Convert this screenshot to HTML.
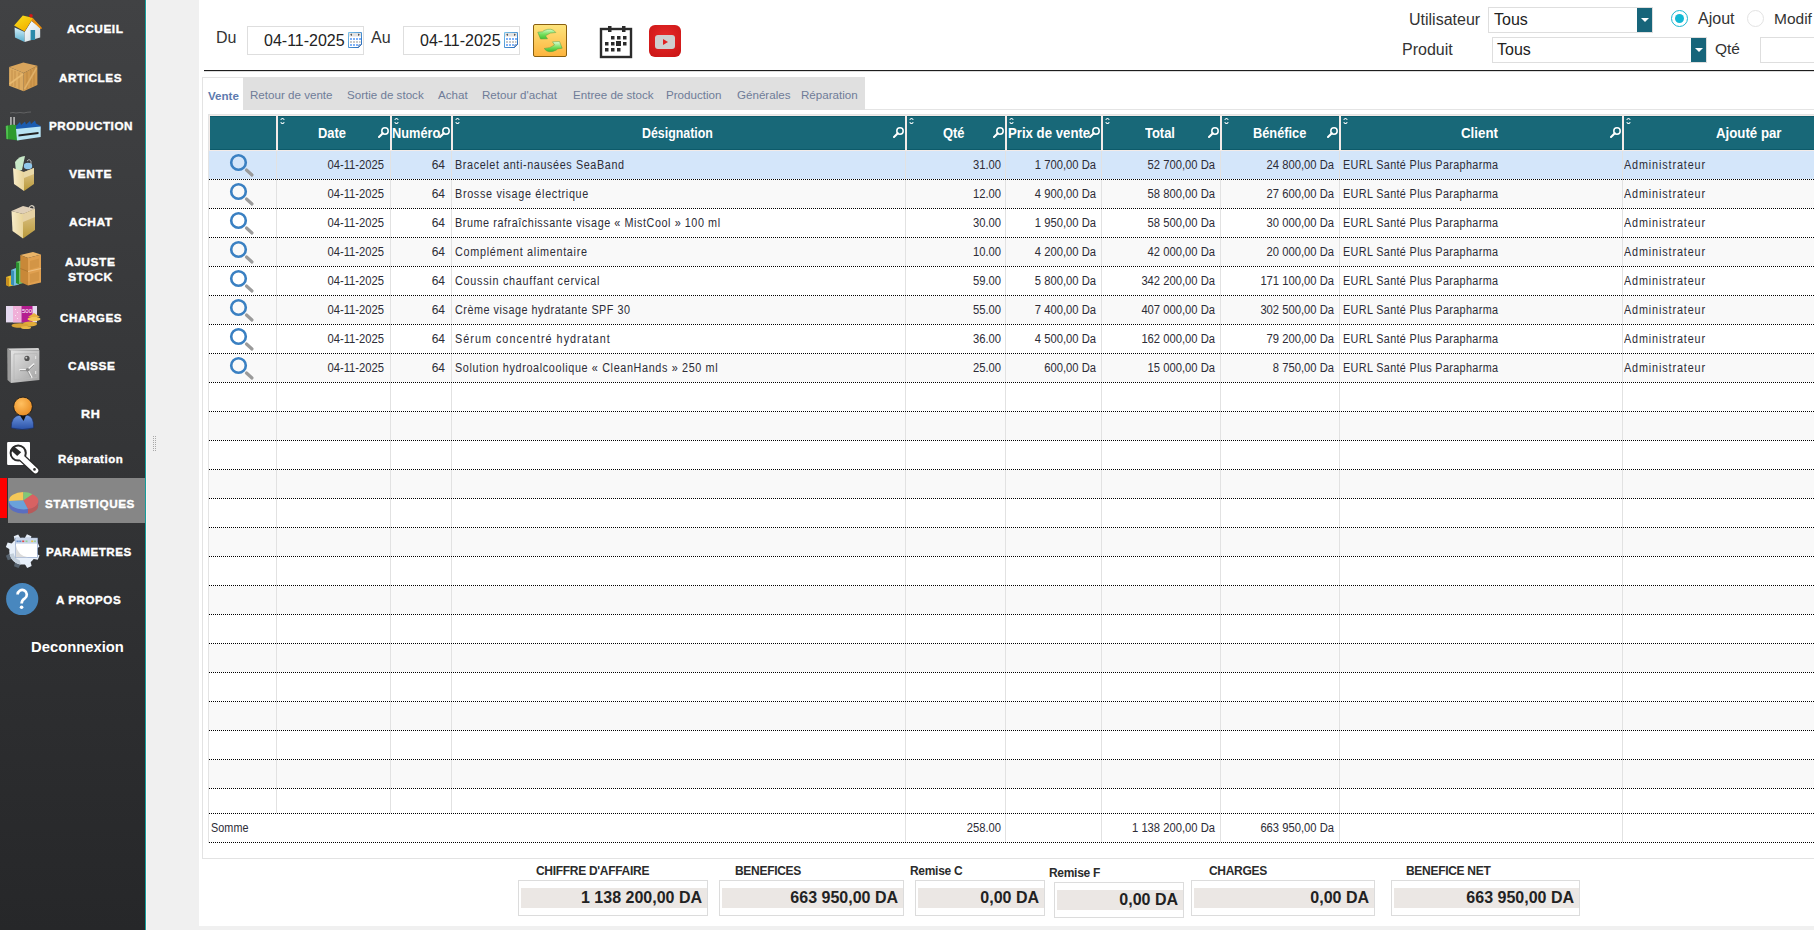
<!DOCTYPE html>
<html><head><meta charset="utf-8"><title>Statistiques</title>
<style>
*{box-sizing:border-box;margin:0;padding:0}
html,body{width:1814px;height:930px;overflow:hidden;background:#f0f0f0;font-family:"Liberation Sans",sans-serif;position:relative}
.abs{position:absolute}
.t{position:absolute;white-space:nowrap;line-height:1}
#side{position:absolute;left:0;top:0;width:145px;height:930px;background:linear-gradient(#414244,#262729)}
#edge{position:absolute;left:145px;top:0;width:1px;height:930px;background:#139e9c}
#edge2{position:absolute;left:146px;top:0;width:1px;height:930px;background:#fbf4f2}
.nav{position:absolute;color:#fff;font-weight:bold;font-size:11px;letter-spacing:0.5px;-webkit-text-stroke:0.35px #fff;white-space:nowrap;line-height:1}
#content{position:absolute;left:199px;top:0;width:1615px;height:926px;background:#fff}
.inp{position:absolute;border:1px solid #dedede;background:#fff}
.sel{position:absolute;border:1px solid #dedede;background:#fff}
.dd{position:absolute;background:#17657a}
.dd:after{content:"";position:absolute;left:4px;top:10px;border-left:4px solid transparent;border-right:4px solid transparent;border-top:4px solid #fff}
.tab{position:absolute;top:89px;font-size:11.6px;color:#6f7c98;white-space:nowrap;line-height:1}
.hc{position:absolute;top:116px;height:34px;background:#186878;border-top:1px solid #0d5a6a;border-bottom:1px solid #0d5a6a}
.ht{position:absolute;top:126px;color:#fff;font-weight:bold;font-size:14px;white-space:nowrap;line-height:1}
.row{position:absolute;left:209px;width:1605px;border-bottom:1px dotted #000}
.sep{position:absolute;width:1px;background:#e2e2e2}
.d{position:absolute;font-size:12px;color:#2c2c36;white-space:nowrap;line-height:1}
.r{text-align:right}
.n{transform:scaleX(0.935);transform-origin:100% 50%}
.lbl{position:absolute;font-size:12px;font-weight:bold;color:#2b2b2b;white-space:nowrap;line-height:1;letter-spacing:-0.3px}
.box{position:absolute;border:1px solid #dcdcdc;background:#fff}
.boxin{position:absolute;left:2px;right:0;top:7px;height:20px;background:#ebe7e4}
.val{position:absolute;right:5px;top:3px;font-size:16px;font-weight:bold;color:#222;white-space:nowrap;line-height:1}
</style></head><body>

<div id="side"></div><div id="edge"></div><div id="edge2"></div>
<div class="abs" style="left:0;top:478px;width:7px;height:40px;background:#ff0000"></div>
<div class="abs" style="left:8px;top:478px;width:137px;height:45px;background:#868686"></div>
<div class="nav" style="left:67.2px;top:24px;transform:scaleX(1.077);transform-origin:0 50%">ACCUEIL</div>
<div class="nav" style="left:59px;top:73px;transform:scaleX(1.068);transform-origin:0 50%">ARTICLES</div>
<div class="nav" style="left:48.5px;top:121px;transform:scaleX(1.064);transform-origin:0 50%">PRODUCTION</div>
<div class="nav" style="left:69.3px;top:169px;transform:scaleX(1.097);transform-origin:0 50%">VENTE</div>
<div class="nav" style="left:68.5px;top:217px;transform:scaleX(1.0875);transform-origin:0 50%">ACHAT</div>
<div class="nav" style="left:65px;top:257px;transform:scaleX(1.087);transform-origin:0 50%">AJUSTE</div>
<div class="nav" style="left:68px;top:272px;transform:scaleX(1.1);transform-origin:0 50%">STOCK</div>
<div class="nav" style="left:59.5px;top:313px;transform:scaleX(1.06);transform-origin:0 50%">CHARGES</div>
<div class="nav" style="left:67.5px;top:361px;transform:scaleX(1.081);transform-origin:0 50%">CAISSE</div>
<div class="nav" style="left:80.6px;top:409px;transform:scaleX(1.144);transform-origin:0 50%">RH</div>
<div class="nav" style="left:58px;top:454px;transform:scaleX(1.044);transform-origin:0 50%">Réparation</div>
<div class="nav" style="left:45.2px;top:499px;transform:scaleX(1.065);transform-origin:0 50%">STATISTIQUES</div>
<div class="nav" style="left:46.2px;top:547px;transform:scaleX(1.057);transform-origin:0 50%">PARAMETRES</div>
<div class="nav" style="left:56.3px;top:595px;transform:scaleX(1.057);transform-origin:0 50%">A PROPOS</div>
<div class="abs" style="left:31px;top:640px;color:#fff;font-weight:bold;font-size:14.8px;white-space:nowrap;line-height:1">Deconnexion</div>
<svg class="abs" style="left:0;top:0" width="145" height="700" viewBox="0 0 145 700">
<defs>
<linearGradient id="roof" x1="0" y1="0" x2="1" y2="1"><stop offset="0" stop-color="#f8e020"/><stop offset="0.6" stop-color="#f5b800"/><stop offset="1" stop-color="#f08800"/></linearGradient>
<linearGradient id="wallL" x1="0" y1="0" x2="0" y2="1"><stop offset="0" stop-color="#d8f0f8"/><stop offset="1" stop-color="#58b0d0"/></linearGradient>
<linearGradient id="wallF" x1="0" y1="0" x2="1" y2="1"><stop offset="0" stop-color="#ffffff"/><stop offset="1" stop-color="#c8d8e0"/></linearGradient>
<linearGradient id="bagL" x1="0" y1="0" x2="1" y2="0"><stop offset="0" stop-color="#f8ecc8"/><stop offset="1" stop-color="#e8d49a"/></linearGradient>
<linearGradient id="bagR" x1="0" y1="0" x2="0" y2="1"><stop offset="0" stop-color="#e0c890"/><stop offset="1" stop-color="#b89838"/></linearGradient>
<linearGradient id="safe" x1="0" y1="0" x2="1" y2="1"><stop offset="0" stop-color="#e4e4e4"/><stop offset="1" stop-color="#a0a0a0"/></linearGradient>
<linearGradient id="body" x1="0" y1="0" x2="0" y2="1"><stop offset="0" stop-color="#6c94dc"/><stop offset="1" stop-color="#2a52a8"/></linearGradient>
<radialGradient id="head" cx="0.4" cy="0.35" r="0.7"><stop offset="0" stop-color="#ffc060"/><stop offset="1" stop-color="#e88a20"/></radialGradient>
<linearGradient id="help" x1="0" y1="0" x2="0" y2="1"><stop offset="0" stop-color="#4e8cc8"/><stop offset="1" stop-color="#3f78b4"/></linearGradient>
</defs>
<!-- house -->
<path d="M14.6 27.4 L24.6 32 L24.6 42 L15 37.4 Z" fill="url(#wallL)"/>
<path d="M24.6 32 L31.5 21 L40.2 27.4 L40.2 37.4 L24.6 42 Z" fill="url(#wallF)"/>
<rect x="30.6" y="30" width="4.5" height="10" fill="#2a8aaa"/>
<path d="M14.1 25.5 L22.8 15.5 L32.4 17.8 L42 28.3 L40.5 28.8 L31.5 20.5 L24.6 31.5 Z" fill="url(#roof)"/>
<path d="M31.5 20.5 L32.4 17.8 L42 28.3 L40.5 28.8 Z" fill="#e88a10"/>
<circle cx="31" cy="15.8" r="1.8" fill="#d01818"/>
<!-- crate -->
<path d="M9.1 67.1 L23.3 62.5 L37.4 65.7 L23.7 73 Z" fill="#d9a55c"/>
<path d="M9.1 67.1 L23.7 73 L23.7 91.3 L9.1 85.8 Z" fill="#dcaa60"/>
<path d="M23.7 73 L37.4 65.7 L37.4 84.9 L23.7 91.3 Z" fill="#d19a4e"/>
<path d="M10 84 L22.5 74 M25 89 L36 68 M12 70 V86 M15 71 V87 M19 72.5 V89 M27 72 V89 M31 70 V87 M34 68 V86" stroke="#b07a38" stroke-width="0.7" opacity="0.7"/>
<path d="M9.5 84 L23 74" stroke="#e8ba70" stroke-width="1.6"/><path d="M24.5 89 L36.5 68" stroke="#e0b068" stroke-width="1.6"/>
<!-- factory -->
<g stroke="#999" stroke-width="0.5" fill="none" opacity="0.8"><path d="M10 113 q3 -1 6 0 q4 -1 8 0 q3 -1 7 -1"/></g>
<rect x="10" y="117" width="1.8" height="9" fill="#aaa"/><rect x="13.2" y="117" width="1.8" height="9" fill="#aaa"/>
<path d="M5.8 126 L13 124.5 L19 126 L19 140.5 L6.5 139 Z" fill="#2e9a2e"/><path d="M5.8 126 L8 125.6 L8 139.3 L6.5 139 Z" fill="#50c050"/>
<path d="M16 129 L16 126 L20 122 L21 125 L25 121.5 L26 124.5 L30 121 L31 124 L35 120.5 L36 123.5 L40.7 126 L40.7 129 Z" fill="#1a5cb0"/>
<path d="M16 129 L40.7 126.5 L40.7 137 L17 140.5 Z" fill="#b8e4f4"/>
<path d="M18.5 134.5 L38.5 132 L38.5 134 L18.5 136.5 Z" fill="#222"/>
<!-- bag vente -->
<path d="M15 162 Q19 156 25 156 L22 170 L16 172 Z" fill="#c8e8c8"/>
<ellipse cx="28" cy="166" rx="4.2" ry="3.2" fill="#90c8ec"/><path d="M27 161 q2 -3 4 0 v3" stroke="#ccc" stroke-width="0.8" fill="none"/>
<path d="M13 168 L24 172 L24 191 L14 184 Z" fill="url(#bagL)"/>
<path d="M24 172 L34 168 L34 184 L24 191 Z" fill="url(#bagR)"/>
<path d="M24 172 L34 168 L34 174 L24 178 Z" fill="#e8d8a8"/>
<!-- bag achat -->
<path d="M29 208 q2 -4 5 -1 v5" stroke="#d8d0c0" stroke-width="1.2" fill="none"/>
<path d="M11.5 211 L23 214 L35 209 L23 206 Z" fill="#e0d0b8"/>
<path d="M11.5 211 L23 214 L23 238.5 L12.5 231 Z" fill="url(#bagL)"/>
<path d="M23 214 L35 209 L35 230 L23 238.5 Z" fill="url(#bagR)"/>
<path d="M23 214 L35 209 L35 217 L23 222 Z" fill="#e6d2a4"/>
<!-- ajuste stock -->
<path d="M6 277 L10.5 275.5 L13.5 277 L13.5 285.6 L9 286.5 L6 285 Z" fill="#e8c030"/><path d="M6 277 L9 278 L9 286.5 L6 285 Z" fill="#c89020"/>
<path d="M11 270 L16 268 L19 270 L19 284.6 L14 285.8 L11 284.5 Z" fill="#78c0e0"/><path d="M11 270 L14 271 L14 285.8 L11 284.5 Z" fill="#3890b8"/>
<path d="M16 262 L21 260.5 L23.7 262 L23.7 283 L19 284.2 L16 283 Z" fill="#70c068"/><path d="M16 262 L19 263 L19 284.2 L16 283 Z" fill="#2a9030"/>
<path d="M20.3 255 L33 252 L41 254.5 L28 258 Z" fill="#eab468"/>
<path d="M20.3 255 L28 258 L28 285.4 L20.3 282 Z" fill="#c88838"/>
<path d="M28 258 L41 254.5 L41 282.5 L28 285.4 Z" fill="#e0a050"/>
<path d="M28 271.5 L41 268.5" stroke="#f0c080" stroke-width="1.2"/><path d="M20.3 268.5 L28 271.5" stroke="#b07830" stroke-width="1"/>
<path d="M30 261 L39 258.5 L39 267 L30 269.5 Z M30 274 L39 271.5 L39 280.5 L30 283 Z" fill="#c98d40" opacity="0.6"/>
<!-- charges -->
<rect x="6" y="306" width="31" height="16.4" fill="#e6daf0"/>
<rect x="13" y="306" width="8.5" height="16.4" fill="#f0b0d8"/>
<rect x="21.5" y="306" width="11" height="16.4" fill="#b41e90"/>
<text x="22" y="312.5" font-family="Liberation Sans" font-size="6" fill="#fff">500</text>
<g fill="#fff" opacity="0.7"><rect x="15" y="309" width="1" height="1"/><rect x="17" y="312" width="1" height="1"/><rect x="15" y="315" width="1" height="1"/><rect x="17" y="318" width="1" height="1"/></g>
<ellipse cx="34" cy="319" rx="6.5" ry="2.2" fill="#f4c658"/><path d="M28 317 L34 313 L40 317" fill="#e8b040"/>
<ellipse cx="30" cy="324" rx="7" ry="2.4" fill="#e2ac3a"/>
<ellipse cx="20" cy="325.5" rx="8.5" ry="2.3" fill="#d8a236"/>
<ellipse cx="26" cy="327.5" rx="5" ry="1.5" fill="#e8b848"/>
<!-- safe -->
<path d="M7.2 348.5 L11 351 L11 383 L7.5 380 Z" fill="#9a9a9a"/>
<path d="M7.2 348.5 L38.5 348 L39.4 350.5 L11 351 Z" fill="#cfcfcf"/>
<path d="M11 351 L39.4 350.5 L39.4 380 L11 383 Z" fill="url(#safe)"/>
<path d="M14 354 L37 353.5 L37 377.5 L14 380 Z" fill="none" stroke="#b8b8b8" stroke-width="0.8"/>
<circle cx="27" cy="358.4" r="2.6" fill="#505050"/><circle cx="26.3" cy="357.7" r="1" fill="#ccc"/>
<g stroke="#f4f4f4" stroke-width="1.6" stroke-linecap="round"><path d="M27.6 369.7 L20 369.7 M27.6 369.7 L33.7 364 M27.6 369.7 L31.7 377.3"/></g>
<g stroke="#6a6a6a" stroke-width="0.6"><path d="M27.6 370.6 L20 370.6 M28.2 370.4 L34 365 M27.2 370.4 L31 377.6"/></g>
<circle cx="27.6" cy="369.7" r="1.8" fill="#888"/>
<rect x="35" y="356" width="1.2" height="3" fill="#e0e0e0"/><rect x="35" y="371" width="1.2" height="3" fill="#e0e0e0"/>
<!-- person -->
<path d="M11.2 428 Q11 416 20 415 L27 415 Q34 416 33.7 428 Q22 431 11.2 428 Z" fill="url(#body)" stroke="#182858" stroke-width="0.6"/>
<path d="M20 415.5 L23.5 421 L26 415.5 Z" fill="#111"/>
<circle cx="23" cy="406.5" r="9.4" fill="url(#head)" stroke="#1a1a1a" stroke-width="0.9"/>
<!-- wrench -->
<rect x="7.1" y="441.9" width="22.9" height="23" rx="1" fill="#fff"/>
<path d="M20 456 L35.5 470.5" stroke="#2b2b2b" stroke-width="8" stroke-linecap="round"/>
<circle cx="18.2" cy="453" r="7.6" fill="#fff" stroke="#2b2b2b" stroke-width="2"/>
<path d="M20 456 L35.5 470.5" stroke="#fff" stroke-width="5.6" stroke-linecap="round"/>
<circle cx="34.5" cy="469.4" r="1.3" fill="#2b2b2b"/>
<path d="M13.5 446 L21.2 452.2 L17.2 456 L11 450.2 Z" fill="#2b2b2b"/>
<!-- pie -->
<path d="M8.7 500.6 L8.7 505.6 A14.8 8.5 0 0 0 38.2 505.6 L38.2 500.6 A14.8 8.5 0 0 1 8.7 500.6 Z" fill="#5a6ec0"/>
<path d="M27.9 509.1 L27.9 514 A14.8 8.5 0 0 0 38.2 505.6 L38.2 500.6 A14.8 8.5 0 0 1 27.9 509.1 Z" fill="#b85a5a"/>
<path d="M23.4 500.6 L9 501 A14.8 8.5 0 0 1 23.4 492.1 Z" fill="#f5c858"/>
<path d="M23.4 500.6 L23.4 492.1 A14.8 8.5 0 0 1 32.5 494.2 Z" fill="#80c878"/>
<path d="M23.4 500.6 L32.5 494.2 A14.8 8.5 0 0 1 27.9 509.1 Z" fill="#d86262"/>
<path d="M23.4 500.6 L27.9 509.1 A14.8 8.5 0 0 1 9 501 Z" fill="#6aa2da"/>
<!-- gear -->
<g transform="translate(22.7 551.2)">
<path d="M-3.2 -12 L-2.4 -17.2 L2.4 -17.2 L3.2 -12 Z" fill="#e6eef8" transform="rotate(22)"/><path d="M-3.2 -12 L-2.4 -17.2 L2.4 -17.2 L3.2 -12 Z" fill="#e6eef8" transform="rotate(67)"/><path d="M-3.2 -12 L-2.4 -17.2 L2.4 -17.2 L3.2 -12 Z" fill="#e6eef8" transform="rotate(112)"/><path d="M-3.2 -12 L-2.4 -17.2 L2.4 -17.2 L3.2 -12 Z" fill="#e6eef8" transform="rotate(157)"/><path d="M-3.2 -12 L-2.4 -17.2 L2.4 -17.2 L3.2 -12 Z" fill="#56626e" transform="rotate(202)"/><path d="M-3.2 -12 L-2.4 -17.2 L2.4 -17.2 L3.2 -12 Z" fill="#56626e" transform="rotate(247)"/><path d="M-3.2 -12 L-2.4 -17.2 L2.4 -17.2 L3.2 -12 Z" fill="#e6eef8" transform="rotate(292)"/><path d="M-3.2 -12 L-2.4 -17.2 L2.4 -17.2 L3.2 -12 Z" fill="#e6eef8" transform="rotate(337)"/>
<circle r="13.4" fill="#e8f0fa"/>
<path d="M-13 3 A13.4 13.4 0 0 0 -2 13.2 L-3 9 A9 9 0 0 1 -9 2 Z" fill="#c4d0dc"/>
</g>
<rect x="15.4" y="538.1" width="22.1" height="19.5" fill="#ffffff" stroke="#8aa2c8" stroke-width="0.7"/>
<rect x="15.8" y="538.5" width="21.3" height="5.2" fill="#c9d6ea"/>
<g><rect x="16.5" y="540.5" width="2.2" height="1.6" fill="#6a90c8"/><rect x="19.2" y="540.5" width="2.2" height="1.6" fill="#6a90c8"/><rect x="22.2" y="540.5" width="2" height="1.6" fill="#e04848"/><rect x="25.5" y="540.5" width="2" height="1.6" fill="#90d090"/><rect x="31.2" y="540.5" width="2" height="1.6" fill="#e8c040"/><rect x="34.2" y="540.5" width="1.6" height="1.6" fill="#90d090"/></g>
<path d="M15.8 545 Q18 556 28 557.2 L15.8 557.2 Z" fill="#dcdcdc"/>
<!-- help -->
<circle cx="22.2" cy="599" r="16.1" fill="#4887be"/>
<path d="M17.6 594.6 A4.6 4.6 0 1 1 24.8 598.4 Q21.6 600.4 21.6 603.6" fill="none" stroke="#fff" stroke-width="2.7"/>
<circle cx="21.6" cy="607.2" r="1.8" fill="#fff"/>
</svg>
<svg class="abs" style="left:153px;top:436px" width="4" height="16"><rect x="0" y="0" width="1" height="1" fill="#a8a8a8"/><rect x="0" y="2" width="1" height="1" fill="#a8a8a8"/><rect x="0" y="4" width="1" height="1" fill="#a8a8a8"/><rect x="0" y="6" width="1" height="1" fill="#a8a8a8"/><rect x="0" y="8" width="1" height="1" fill="#a8a8a8"/><rect x="0" y="10" width="1" height="1" fill="#a8a8a8"/><rect x="0" y="12" width="1" height="1" fill="#a8a8a8"/><rect x="0" y="14" width="1" height="1" fill="#a8a8a8"/><rect x="2" y="0" width="1" height="1" fill="#a8a8a8"/><rect x="2" y="2" width="1" height="1" fill="#a8a8a8"/><rect x="2" y="4" width="1" height="1" fill="#a8a8a8"/><rect x="2" y="6" width="1" height="1" fill="#a8a8a8"/><rect x="2" y="8" width="1" height="1" fill="#a8a8a8"/><rect x="2" y="10" width="1" height="1" fill="#a8a8a8"/><rect x="2" y="12" width="1" height="1" fill="#a8a8a8"/><rect x="2" y="14" width="1" height="1" fill="#a8a8a8"/></svg>
<div id="content"></div>
<div class="t" style="left:216px;top:30px;font-size:16px;color:#333">Du</div>
<div class="inp" style="left:247px;top:26px;width:117px;height:29px"></div>
<div class="t" style="left:264px;top:33px;font-size:16px;color:#222;letter-spacing:0px">04-11-2025</div>
<div class="t" style="left:371px;top:30px;font-size:16px;color:#333">Au</div>
<div class="inp" style="left:403px;top:26px;width:117px;height:29px"></div>
<div class="t" style="left:420px;top:33px;font-size:16px;color:#222;letter-spacing:0px">04-11-2025</div>
<svg class="abs" style="left:348px;top:32px" width="14" height="16" viewBox="0 0 14 16">
<defs><linearGradient id="cb348" x1="0" y1="0" x2="1" y2="1"><stop offset="0" stop-color="#7cc4ec"/><stop offset="1" stop-color="#1f64b8"/></linearGradient></defs>
<path d="M0.5 0.5 H13.5 V12.5 L10.5 15.5 H0.5 Z" fill="#fff" stroke="url(#cb348)" stroke-width="1"/>
<rect x="1" y="1" width="12" height="3.5" fill="#e2e2e2"/><path d="M2 2.8 L4 1.5 V4 Z M12 2.8 L10 1.5 V4 Z" fill="#555"/>
<g fill="#7fb2f8"><rect x="2" y="6" width="2" height="2"/><rect x="5" y="6" width="2" height="2"/><rect x="8" y="6" width="2" height="2"/><rect x="11" y="6" width="2" height="2"/>
<rect x="2" y="12" width="2" height="2"/><rect x="5" y="12" width="2" height="2"/><rect x="8" y="12" width="2" height="2"/></g>
<g fill="#c8c8c8"><rect x="2" y="9" width="2" height="2"/><rect x="5" y="9" width="2" height="2"/><rect x="8" y="9" width="2" height="2"/><rect x="11" y="9" width="1.5" height="2"/></g>
<path d="M10.5 15.5 L13.5 12.5 L10.8 12.8 Z" fill="#b0b0b0" stroke="#2a6ac0" stroke-width="0.6"/></svg>
<svg class="abs" style="left:504px;top:32px" width="14" height="16" viewBox="0 0 14 16">
<defs><linearGradient id="cb504" x1="0" y1="0" x2="1" y2="1"><stop offset="0" stop-color="#7cc4ec"/><stop offset="1" stop-color="#1f64b8"/></linearGradient></defs>
<path d="M0.5 0.5 H13.5 V12.5 L10.5 15.5 H0.5 Z" fill="#fff" stroke="url(#cb504)" stroke-width="1"/>
<rect x="1" y="1" width="12" height="3.5" fill="#e2e2e2"/><path d="M2 2.8 L4 1.5 V4 Z M12 2.8 L10 1.5 V4 Z" fill="#555"/>
<g fill="#7fb2f8"><rect x="2" y="6" width="2" height="2"/><rect x="5" y="6" width="2" height="2"/><rect x="8" y="6" width="2" height="2"/><rect x="11" y="6" width="2" height="2"/>
<rect x="2" y="12" width="2" height="2"/><rect x="5" y="12" width="2" height="2"/><rect x="8" y="12" width="2" height="2"/></g>
<g fill="#c8c8c8"><rect x="2" y="9" width="2" height="2"/><rect x="5" y="9" width="2" height="2"/><rect x="8" y="9" width="2" height="2"/><rect x="11" y="9" width="1.5" height="2"/></g>
<path d="M10.5 15.5 L13.5 12.5 L10.8 12.8 Z" fill="#b0b0b0" stroke="#2a6ac0" stroke-width="0.6"/></svg>
<div class="abs" style="left:533px;top:24px;width:34px;height:33px;border:1.5px solid #8a6010;border-radius:2px;background:linear-gradient(#fde47c,#fdb43e)"></div>
<svg class="abs" style="left:533px;top:24px" width="34" height="33" viewBox="0 0 34 33">
<defs><linearGradient id="ga" x1="0" y1="0" x2="0" y2="1"><stop offset="0" stop-color="#d8ffc8"/><stop offset="0.5" stop-color="#78e060"/><stop offset="1" stop-color="#40c030"/></linearGradient>
<linearGradient id="gb" x1="0" y1="0" x2="0" y2="1"><stop offset="0" stop-color="#e0ffd8"/><stop offset="0.6" stop-color="#70dc58"/><stop offset="1" stop-color="#3cb82c"/></linearGradient></defs>
<path d="M22.8 8.5 Q19 3 11 6.5 L9.5 7.8 L4.8 8.2 L7.5 15 L14.5 14.8 L12.5 11.8 Q17 8 22.8 8.5 Z" fill="url(#ga)" stroke="#5a9a40" stroke-width="0.5"/>
<path d="M11.2 24.5 Q15 30 23 26.2 L24.5 25 L29.2 24.2 L26.5 17.5 L19.5 17.8 L21.5 21 Q17 24.5 11.2 24.5 Z" fill="url(#gb)" stroke="#5a9a40" stroke-width="0.5"/></svg>
<svg class="abs" style="left:599px;top:25px" width="34" height="34" viewBox="0 0 34 34">
<rect x="2" y="4" width="30" height="28" fill="none" stroke="#2b2b2b" stroke-width="2.4"/>
<rect x="9" y="1" width="3.5" height="6" fill="#2b2b2b"/><rect x="23" y="1" width="3.5" height="6" fill="#2b2b2b"/>
<g fill="#2b2b2b"><rect x="12" y="11" width="3.5" height="3.5"/><rect x="18" y="11" width="3.5" height="3.5"/><rect x="24" y="11" width="3.5" height="3.5"/>
<rect x="6" y="17" width="3.5" height="3.5"/><rect x="12" y="17" width="3.5" height="3.5"/><rect x="17" y="16" width="5" height="5"/><rect x="24" y="17" width="3.5" height="3.5"/>
<rect x="6" y="23" width="3.5" height="3.5"/><rect x="12" y="23" width="3.5" height="3.5"/><rect x="18" y="23" width="3.5" height="3.5"/></g></svg>
<div class="abs" style="left:649px;top:25px;width:32px;height:32px;border-radius:6px;background:radial-gradient(circle at 50% 40%,#e82a2a,#c81414)"></div>
<div class="abs" style="left:655px;top:35px;width:20px;height:14px;border-radius:3px;background:#cfcfcf"></div>
<div class="abs" style="left:663px;top:38.5px;width:0;height:0;border-top:3.5px solid transparent;border-bottom:3.5px solid transparent;border-left:5.5px solid #e02020"></div>
<div class="t" style="left:1409px;top:12px;font-size:16px;color:#333">Utilisateur</div>
<div class="sel" style="left:1488px;top:7px;width:165px;height:26px"></div>
<div class="dd" style="left:1637px;top:8px;width:15px;height:24px"></div>
<div class="t" style="left:1494px;top:12px;font-size:16px;color:#222">Tous</div>
<div class="t" style="left:1402px;top:42px;font-size:16px;color:#333">Produit</div>
<div class="sel" style="left:1492px;top:37px;width:215px;height:26px"></div>
<div class="dd" style="left:1691px;top:38px;width:15px;height:24px"></div>
<div class="t" style="left:1497px;top:42px;font-size:16px;color:#222">Tous</div>
<div class="abs" style="left:1671px;top:10px;width:17px;height:17px;border-radius:50%;border:1.5px solid #1ab7d2;background:#fff"></div>
<div class="abs" style="left:1675px;top:14px;width:9px;height:9px;border-radius:50%;background:#12b8d4"></div>
<div class="t" style="left:1698px;top:11px;font-size:16px;color:#333">Ajout</div>
<div class="abs" style="left:1747px;top:10px;width:17px;height:17px;border-radius:50%;border:1px solid #e3e3e3;background:#fff"></div>
<div class="t" style="left:1774px;top:11px;font-size:15.5px;color:#333">Modif</div>
<div class="t" style="left:1715px;top:41px;font-size:15.5px;color:#333">Qté</div>
<div class="inp" style="left:1760px;top:37px;width:80px;height:26px"></div>
<div class="abs" style="left:204px;top:70px;width:1610px;height:1px;background:#1e1e1e"></div>
<div class="abs" style="left:204px;top:71px;width:1610px;height:1px;background:#9a9a9a;opacity:0.35"></div>
<div class="abs" style="left:202px;top:77px;width:1640px;height:782px;border:1px solid #e3e3e3;border-top:none;background:#fff"></div>
<div class="abs" style="left:202px;top:77px;width:41px;height:1px;background:#e3e3e3"></div>
<div class="abs" style="left:865px;top:109px;width:960px;height:1px;background:#e4e4e4"></div>
<div class="abs" style="left:243px;top:77px;width:622px;height:33px;background:#e0e0e0"></div>
<div class="t" style="left:208px;top:90px;font-size:11.6px;font-weight:bold;color:#5d7aae">Vente</div>
<div class="tab" style="left:250px">Retour de vente</div>
<div class="tab" style="left:347px">Sortie de stock</div>
<div class="tab" style="left:438px">Achat</div>
<div class="tab" style="left:482px">Retour d'achat</div>
<div class="tab" style="left:573px">Entree de stock</div>
<div class="tab" style="left:666px">Production</div>
<div class="tab" style="left:737px">Générales</div>
<div class="tab" style="left:801px">Réparation</div>
<div class="abs" style="left:208px;top:114px;width:1620px;height:1px;background:#e4e4e4"></div>
<div class="abs" style="left:208px;top:114px;width:1px;height:729px;background:#e4e4e4"></div>
<div class="abs" style="left:209px;top:115px;width:1610px;height:36px;background:#f3ebe8"></div>
<div class="hc" style="left:210px;width:66px"></div>
<div class="hc" style="left:278px;width:112px"></div>
<svg class="abs" style="left:280px;top:117px" width="5" height="8" viewBox="0 0 5 8"><path d="M0.7 2.8 Q2.5 0.2 4.3 2.8 M0.7 5.2 Q2.5 7.8 4.3 5.2" fill="none" stroke="#fff" stroke-width="1.1"/></svg>
<svg class="abs" style="left:378px;top:127px" width="11" height="11" viewBox="0 0 11 11"><circle cx="7" cy="4" r="3.2" fill="none" stroke="#fff" stroke-width="1.5"/><path d="M4.8 6.2 L1 10" stroke="#fff" stroke-width="2" stroke-linecap="round"/></svg>
<div class="hc" style="left:392px;width:59px"></div>
<svg class="abs" style="left:394px;top:117px" width="5" height="8" viewBox="0 0 5 8"><path d="M0.7 2.8 Q2.5 0.2 4.3 2.8 M0.7 5.2 Q2.5 7.8 4.3 5.2" fill="none" stroke="#fff" stroke-width="1.1"/></svg>
<svg class="abs" style="left:439px;top:127px" width="11" height="11" viewBox="0 0 11 11"><circle cx="7" cy="4" r="3.2" fill="none" stroke="#fff" stroke-width="1.5"/><path d="M4.8 6.2 L1 10" stroke="#fff" stroke-width="2" stroke-linecap="round"/></svg>
<div class="hc" style="left:453px;width:452px"></div>
<svg class="abs" style="left:455px;top:117px" width="5" height="8" viewBox="0 0 5 8"><path d="M0.7 2.8 Q2.5 0.2 4.3 2.8 M0.7 5.2 Q2.5 7.8 4.3 5.2" fill="none" stroke="#fff" stroke-width="1.1"/></svg>
<svg class="abs" style="left:893px;top:127px" width="11" height="11" viewBox="0 0 11 11"><circle cx="7" cy="4" r="3.2" fill="none" stroke="#fff" stroke-width="1.5"/><path d="M4.8 6.2 L1 10" stroke="#fff" stroke-width="2" stroke-linecap="round"/></svg>
<div class="hc" style="left:907px;width:98px"></div>
<svg class="abs" style="left:909px;top:117px" width="5" height="8" viewBox="0 0 5 8"><path d="M0.7 2.8 Q2.5 0.2 4.3 2.8 M0.7 5.2 Q2.5 7.8 4.3 5.2" fill="none" stroke="#fff" stroke-width="1.1"/></svg>
<svg class="abs" style="left:993px;top:127px" width="11" height="11" viewBox="0 0 11 11"><circle cx="7" cy="4" r="3.2" fill="none" stroke="#fff" stroke-width="1.5"/><path d="M4.8 6.2 L1 10" stroke="#fff" stroke-width="2" stroke-linecap="round"/></svg>
<div class="hc" style="left:1007px;width:94px"></div>
<svg class="abs" style="left:1009px;top:117px" width="5" height="8" viewBox="0 0 5 8"><path d="M0.7 2.8 Q2.5 0.2 4.3 2.8 M0.7 5.2 Q2.5 7.8 4.3 5.2" fill="none" stroke="#fff" stroke-width="1.1"/></svg>
<svg class="abs" style="left:1089px;top:127px" width="11" height="11" viewBox="0 0 11 11"><circle cx="7" cy="4" r="3.2" fill="none" stroke="#fff" stroke-width="1.5"/><path d="M4.8 6.2 L1 10" stroke="#fff" stroke-width="2" stroke-linecap="round"/></svg>
<div class="hc" style="left:1103px;width:117px"></div>
<svg class="abs" style="left:1105px;top:117px" width="5" height="8" viewBox="0 0 5 8"><path d="M0.7 2.8 Q2.5 0.2 4.3 2.8 M0.7 5.2 Q2.5 7.8 4.3 5.2" fill="none" stroke="#fff" stroke-width="1.1"/></svg>
<svg class="abs" style="left:1208px;top:127px" width="11" height="11" viewBox="0 0 11 11"><circle cx="7" cy="4" r="3.2" fill="none" stroke="#fff" stroke-width="1.5"/><path d="M4.8 6.2 L1 10" stroke="#fff" stroke-width="2" stroke-linecap="round"/></svg>
<div class="hc" style="left:1222px;width:117px"></div>
<svg class="abs" style="left:1224px;top:117px" width="5" height="8" viewBox="0 0 5 8"><path d="M0.7 2.8 Q2.5 0.2 4.3 2.8 M0.7 5.2 Q2.5 7.8 4.3 5.2" fill="none" stroke="#fff" stroke-width="1.1"/></svg>
<svg class="abs" style="left:1327px;top:127px" width="11" height="11" viewBox="0 0 11 11"><circle cx="7" cy="4" r="3.2" fill="none" stroke="#fff" stroke-width="1.5"/><path d="M4.8 6.2 L1 10" stroke="#fff" stroke-width="2" stroke-linecap="round"/></svg>
<div class="hc" style="left:1341px;width:281px"></div>
<svg class="abs" style="left:1343px;top:117px" width="5" height="8" viewBox="0 0 5 8"><path d="M0.7 2.8 Q2.5 0.2 4.3 2.8 M0.7 5.2 Q2.5 7.8 4.3 5.2" fill="none" stroke="#fff" stroke-width="1.1"/></svg>
<svg class="abs" style="left:1610px;top:127px" width="11" height="11" viewBox="0 0 11 11"><circle cx="7" cy="4" r="3.2" fill="none" stroke="#fff" stroke-width="1.5"/><path d="M4.8 6.2 L1 10" stroke="#fff" stroke-width="2" stroke-linecap="round"/></svg>
<div class="hc" style="left:1624px;width:250px"></div>
<svg class="abs" style="left:1626px;top:117px" width="5" height="8" viewBox="0 0 5 8"><path d="M0.7 2.8 Q2.5 0.2 4.3 2.8 M0.7 5.2 Q2.5 7.8 4.3 5.2" fill="none" stroke="#fff" stroke-width="1.1"/></svg>
<div class="ht" style="left:318.2px;transform:scaleX(0.921);transform-origin:0 50%">Date</div>
<div class="ht" style="left:391.8px;transform:scaleX(0.913);transform-origin:0 50%">Numéro</div>
<div class="ht" style="left:641.7px;transform:scaleX(0.885);transform-origin:0 50%">Désignation</div>
<div class="ht" style="left:943.2px;transform:scaleX(0.923);transform-origin:0 50%">Qté</div>
<div class="ht" style="left:1008.0px;transform:scaleX(0.943);transform-origin:0 50%">Prix de vente</div>
<div class="ht" style="left:1145.2px;transform:scaleX(0.924);transform-origin:0 50%">Total</div>
<div class="ht" style="left:1252.6px;transform:scaleX(0.914);transform-origin:0 50%">Bénéfice</div>
<div class="ht" style="left:1461.2px;transform:scaleX(0.950);transform-origin:0 50%">Client</div>
<div class="ht" style="left:1716.1px;transform:scaleX(0.946);transform-origin:0 50%">Ajouté par</div>
<div class="abs" style="left:209px;top:151px;width:1605px;height:28px;background:#d4e6fa"></div>
<div class="abs" style="left:209px;top:180px;width:1605px;height:28px;background:#f9f9f9"></div>
<div class="abs" style="left:209px;top:209px;width:1605px;height:28px;background:#fff"></div>
<div class="abs" style="left:209px;top:238px;width:1605px;height:28px;background:#f9f9f9"></div>
<div class="abs" style="left:209px;top:267px;width:1605px;height:28px;background:#fff"></div>
<div class="abs" style="left:209px;top:296px;width:1605px;height:28px;background:#f9f9f9"></div>
<div class="abs" style="left:209px;top:325px;width:1605px;height:28px;background:#fff"></div>
<div class="abs" style="left:209px;top:354px;width:1605px;height:28px;background:#f9f9f9"></div>
<div class="abs" style="left:209px;top:383px;width:1605px;height:28px;background:#fff"></div>
<div class="abs" style="left:209px;top:412px;width:1605px;height:28px;background:#f9f9f9"></div>
<div class="abs" style="left:209px;top:441px;width:1605px;height:28px;background:#fff"></div>
<div class="abs" style="left:209px;top:470px;width:1605px;height:28px;background:#f9f9f9"></div>
<div class="abs" style="left:209px;top:499px;width:1605px;height:28px;background:#fff"></div>
<div class="abs" style="left:209px;top:528px;width:1605px;height:28px;background:#f9f9f9"></div>
<div class="abs" style="left:209px;top:557px;width:1605px;height:28px;background:#fff"></div>
<div class="abs" style="left:209px;top:586px;width:1605px;height:28px;background:#f9f9f9"></div>
<div class="abs" style="left:209px;top:615px;width:1605px;height:28px;background:#fff"></div>
<div class="abs" style="left:209px;top:644px;width:1605px;height:28px;background:#f9f9f9"></div>
<div class="abs" style="left:209px;top:673px;width:1605px;height:28px;background:#fff"></div>
<div class="abs" style="left:209px;top:702px;width:1605px;height:28px;background:#f9f9f9"></div>
<div class="abs" style="left:209px;top:731px;width:1605px;height:28px;background:#fff"></div>
<div class="abs" style="left:209px;top:760px;width:1605px;height:28px;background:#f9f9f9"></div>
<div class="abs" style="left:209px;top:789px;width:1605px;height:24px;background:#fff"></div>
<div class="sep" style="left:276px;top:151px;height:662px"></div>
<div class="sep" style="left:390px;top:151px;height:662px"></div>
<div class="sep" style="left:451px;top:151px;height:662px"></div>
<div class="sep" style="left:905px;top:151px;height:662px"></div>
<div class="sep" style="left:1005px;top:151px;height:662px"></div>
<div class="sep" style="left:1101px;top:151px;height:662px"></div>
<div class="sep" style="left:1220px;top:151px;height:662px"></div>
<div class="sep" style="left:1339px;top:151px;height:662px"></div>
<div class="sep" style="left:1622px;top:151px;height:662px"></div>
<div class="sep" style="left:905px;top:814px;height:28px"></div>
<div class="sep" style="left:1005px;top:814px;height:28px"></div>
<div class="sep" style="left:1101px;top:814px;height:28px"></div>
<div class="sep" style="left:1220px;top:814px;height:28px"></div>
<div class="sep" style="left:1339px;top:814px;height:28px"></div>
<div class="sep" style="left:1622px;top:814px;height:28px"></div>
<div class="abs" style="left:209px;top:179px;width:1605px;height:1px;border-top:1px dotted #000"></div>
<div class="abs" style="left:209px;top:208px;width:1605px;height:1px;border-top:1px dotted #000"></div>
<div class="abs" style="left:209px;top:237px;width:1605px;height:1px;border-top:1px dotted #000"></div>
<div class="abs" style="left:209px;top:266px;width:1605px;height:1px;border-top:1px dotted #000"></div>
<div class="abs" style="left:209px;top:295px;width:1605px;height:1px;border-top:1px dotted #000"></div>
<div class="abs" style="left:209px;top:324px;width:1605px;height:1px;border-top:1px dotted #000"></div>
<div class="abs" style="left:209px;top:353px;width:1605px;height:1px;border-top:1px dotted #000"></div>
<div class="abs" style="left:209px;top:382px;width:1605px;height:1px;border-top:1px dotted #000"></div>
<div class="abs" style="left:209px;top:411px;width:1605px;height:1px;border-top:1px dotted #000"></div>
<div class="abs" style="left:209px;top:440px;width:1605px;height:1px;border-top:1px dotted #000"></div>
<div class="abs" style="left:209px;top:469px;width:1605px;height:1px;border-top:1px dotted #000"></div>
<div class="abs" style="left:209px;top:498px;width:1605px;height:1px;border-top:1px dotted #000"></div>
<div class="abs" style="left:209px;top:527px;width:1605px;height:1px;border-top:1px dotted #000"></div>
<div class="abs" style="left:209px;top:556px;width:1605px;height:1px;border-top:1px dotted #000"></div>
<div class="abs" style="left:209px;top:585px;width:1605px;height:1px;border-top:1px dotted #000"></div>
<div class="abs" style="left:209px;top:614px;width:1605px;height:1px;border-top:1px dotted #000"></div>
<div class="abs" style="left:209px;top:643px;width:1605px;height:1px;border-top:1px dotted #000"></div>
<div class="abs" style="left:209px;top:672px;width:1605px;height:1px;border-top:1px dotted #000"></div>
<div class="abs" style="left:209px;top:701px;width:1605px;height:1px;border-top:1px dotted #000"></div>
<div class="abs" style="left:209px;top:730px;width:1605px;height:1px;border-top:1px dotted #000"></div>
<div class="abs" style="left:209px;top:759px;width:1605px;height:1px;border-top:1px dotted #000"></div>
<div class="abs" style="left:209px;top:788px;width:1605px;height:1px;border-top:1px dotted #000"></div>
<div class="abs" style="left:209px;top:813px;width:1605px;height:1px;border-top:1px dotted #000"></div>
<div class="abs" style="left:209px;top:842px;width:1605px;height:1px;border-top:1px dotted #000"></div>
<svg class="abs" style="left:229px;top:153px" width="26" height="26" viewBox="0 0 26 26"><circle cx="9.5" cy="9.5" r="7.3" fill="none" stroke="#3a80c2" stroke-width="2.6"/><path d="M17.5 17 L23 22" stroke="#9a9a9a" stroke-width="3.2" stroke-linecap="round"/></svg>
<div class="d r n" style="left:300px;width:84px;top:159px">04-11-2025</div>
<div class="d r" style="left:400px;width:45px;top:159px">64</div>
<div class="d" style="left:455px;top:159px;transform:scaleX(0.9);transform-origin:0 50%;letter-spacing:0.680px">Bracelet anti-nausées SeaBand</div>
<div class="d r n" style="left:921px;width:80px;top:159px">31.00</div>
<div class="d r n" style="left:1011px;width:85px;top:159px">1 700,00 Da</div>
<div class="d r n" style="left:1106px;width:109px;top:159px">52 700,00 Da</div>
<div class="d r n" style="left:1225px;width:109px;top:159px">24 800,00 Da</div>
<div class="d" style="left:1343px;top:159px;transform:scaleX(0.9);transform-origin:0 50%;letter-spacing:0.398px">EURL Santé Plus Parapharma</div>
<div class="d" style="left:1624px;top:159px;transform:scaleX(0.9);transform-origin:0 50%;letter-spacing:0.972px">Administrateur</div>
<svg class="abs" style="left:229px;top:182px" width="26" height="26" viewBox="0 0 26 26"><circle cx="9.5" cy="9.5" r="7.3" fill="none" stroke="#3a80c2" stroke-width="2.6"/><path d="M17.5 17 L23 22" stroke="#9a9a9a" stroke-width="3.2" stroke-linecap="round"/></svg>
<div class="d r n" style="left:300px;width:84px;top:188px">04-11-2025</div>
<div class="d r" style="left:400px;width:45px;top:188px">64</div>
<div class="d" style="left:455px;top:188px;transform:scaleX(0.9);transform-origin:0 50%;letter-spacing:0.756px">Brosse visage électrique</div>
<div class="d r n" style="left:921px;width:80px;top:188px">12.00</div>
<div class="d r n" style="left:1011px;width:85px;top:188px">4 900,00 Da</div>
<div class="d r n" style="left:1106px;width:109px;top:188px">58 800,00 Da</div>
<div class="d r n" style="left:1225px;width:109px;top:188px">27 600,00 Da</div>
<div class="d" style="left:1343px;top:188px;transform:scaleX(0.9);transform-origin:0 50%;letter-spacing:0.398px">EURL Santé Plus Parapharma</div>
<div class="d" style="left:1624px;top:188px;transform:scaleX(0.9);transform-origin:0 50%;letter-spacing:0.972px">Administrateur</div>
<svg class="abs" style="left:229px;top:211px" width="26" height="26" viewBox="0 0 26 26"><circle cx="9.5" cy="9.5" r="7.3" fill="none" stroke="#3a80c2" stroke-width="2.6"/><path d="M17.5 17 L23 22" stroke="#9a9a9a" stroke-width="3.2" stroke-linecap="round"/></svg>
<div class="d r n" style="left:300px;width:84px;top:217px">04-11-2025</div>
<div class="d r" style="left:400px;width:45px;top:217px">64</div>
<div class="d" style="left:455px;top:217px;transform:scaleX(0.9);transform-origin:0 50%;letter-spacing:0.632px">Brume rafraîchissante visage « MistCool » 100 ml</div>
<div class="d r n" style="left:921px;width:80px;top:217px">30.00</div>
<div class="d r n" style="left:1011px;width:85px;top:217px">1 950,00 Da</div>
<div class="d r n" style="left:1106px;width:109px;top:217px">58 500,00 Da</div>
<div class="d r n" style="left:1225px;width:109px;top:217px">30 000,00 Da</div>
<div class="d" style="left:1343px;top:217px;transform:scaleX(0.9);transform-origin:0 50%;letter-spacing:0.398px">EURL Santé Plus Parapharma</div>
<div class="d" style="left:1624px;top:217px;transform:scaleX(0.9);transform-origin:0 50%;letter-spacing:0.972px">Administrateur</div>
<svg class="abs" style="left:229px;top:240px" width="26" height="26" viewBox="0 0 26 26"><circle cx="9.5" cy="9.5" r="7.3" fill="none" stroke="#3a80c2" stroke-width="2.6"/><path d="M17.5 17 L23 22" stroke="#9a9a9a" stroke-width="3.2" stroke-linecap="round"/></svg>
<div class="d r n" style="left:300px;width:84px;top:246px">04-11-2025</div>
<div class="d r" style="left:400px;width:45px;top:246px">64</div>
<div class="d" style="left:455px;top:246px;transform:scaleX(0.9);transform-origin:0 50%;letter-spacing:0.791px">Complément alimentaire</div>
<div class="d r n" style="left:921px;width:80px;top:246px">10.00</div>
<div class="d r n" style="left:1011px;width:85px;top:246px">4 200,00 Da</div>
<div class="d r n" style="left:1106px;width:109px;top:246px">42 000,00 Da</div>
<div class="d r n" style="left:1225px;width:109px;top:246px">20 000,00 Da</div>
<div class="d" style="left:1343px;top:246px;transform:scaleX(0.9);transform-origin:0 50%;letter-spacing:0.398px">EURL Santé Plus Parapharma</div>
<div class="d" style="left:1624px;top:246px;transform:scaleX(0.9);transform-origin:0 50%;letter-spacing:0.972px">Administrateur</div>
<svg class="abs" style="left:229px;top:269px" width="26" height="26" viewBox="0 0 26 26"><circle cx="9.5" cy="9.5" r="7.3" fill="none" stroke="#3a80c2" stroke-width="2.6"/><path d="M17.5 17 L23 22" stroke="#9a9a9a" stroke-width="3.2" stroke-linecap="round"/></svg>
<div class="d r n" style="left:300px;width:84px;top:275px">04-11-2025</div>
<div class="d r" style="left:400px;width:45px;top:275px">64</div>
<div class="d" style="left:455px;top:275px;transform:scaleX(0.9);transform-origin:0 50%;letter-spacing:0.825px">Coussin chauffant cervical</div>
<div class="d r n" style="left:921px;width:80px;top:275px">59.00</div>
<div class="d r n" style="left:1011px;width:85px;top:275px">5 800,00 Da</div>
<div class="d r n" style="left:1106px;width:109px;top:275px">342 200,00 Da</div>
<div class="d r n" style="left:1225px;width:109px;top:275px">171 100,00 Da</div>
<div class="d" style="left:1343px;top:275px;transform:scaleX(0.9);transform-origin:0 50%;letter-spacing:0.398px">EURL Santé Plus Parapharma</div>
<div class="d" style="left:1624px;top:275px;transform:scaleX(0.9);transform-origin:0 50%;letter-spacing:0.972px">Administrateur</div>
<svg class="abs" style="left:229px;top:298px" width="26" height="26" viewBox="0 0 26 26"><circle cx="9.5" cy="9.5" r="7.3" fill="none" stroke="#3a80c2" stroke-width="2.6"/><path d="M17.5 17 L23 22" stroke="#9a9a9a" stroke-width="3.2" stroke-linecap="round"/></svg>
<div class="d r n" style="left:300px;width:84px;top:304px">04-11-2025</div>
<div class="d r" style="left:400px;width:45px;top:304px">64</div>
<div class="d" style="left:455px;top:304px;transform:scaleX(0.9);transform-origin:0 50%;letter-spacing:0.589px">Crème visage hydratante SPF 30</div>
<div class="d r n" style="left:921px;width:80px;top:304px">55.00</div>
<div class="d r n" style="left:1011px;width:85px;top:304px">7 400,00 Da</div>
<div class="d r n" style="left:1106px;width:109px;top:304px">407 000,00 Da</div>
<div class="d r n" style="left:1225px;width:109px;top:304px">302 500,00 Da</div>
<div class="d" style="left:1343px;top:304px;transform:scaleX(0.9);transform-origin:0 50%;letter-spacing:0.398px">EURL Santé Plus Parapharma</div>
<div class="d" style="left:1624px;top:304px;transform:scaleX(0.9);transform-origin:0 50%;letter-spacing:0.972px">Administrateur</div>
<svg class="abs" style="left:229px;top:327px" width="26" height="26" viewBox="0 0 26 26"><circle cx="9.5" cy="9.5" r="7.3" fill="none" stroke="#3a80c2" stroke-width="2.6"/><path d="M17.5 17 L23 22" stroke="#9a9a9a" stroke-width="3.2" stroke-linecap="round"/></svg>
<div class="d r n" style="left:300px;width:84px;top:333px">04-11-2025</div>
<div class="d r" style="left:400px;width:45px;top:333px">64</div>
<div class="d" style="left:455px;top:333px;transform:scaleX(0.9);transform-origin:0 50%;letter-spacing:1.137px">Sérum concentré hydratant</div>
<div class="d r n" style="left:921px;width:80px;top:333px">36.00</div>
<div class="d r n" style="left:1011px;width:85px;top:333px">4 500,00 Da</div>
<div class="d r n" style="left:1106px;width:109px;top:333px">162 000,00 Da</div>
<div class="d r n" style="left:1225px;width:109px;top:333px">79 200,00 Da</div>
<div class="d" style="left:1343px;top:333px;transform:scaleX(0.9);transform-origin:0 50%;letter-spacing:0.398px">EURL Santé Plus Parapharma</div>
<div class="d" style="left:1624px;top:333px;transform:scaleX(0.9);transform-origin:0 50%;letter-spacing:0.972px">Administrateur</div>
<svg class="abs" style="left:229px;top:356px" width="26" height="26" viewBox="0 0 26 26"><circle cx="9.5" cy="9.5" r="7.3" fill="none" stroke="#3a80c2" stroke-width="2.6"/><path d="M17.5 17 L23 22" stroke="#9a9a9a" stroke-width="3.2" stroke-linecap="round"/></svg>
<div class="d r n" style="left:300px;width:84px;top:362px">04-11-2025</div>
<div class="d r" style="left:400px;width:45px;top:362px">64</div>
<div class="d" style="left:455px;top:362px;transform:scaleX(0.9);transform-origin:0 50%;letter-spacing:0.718px">Solution hydroalcoolique « CleanHands » 250 ml</div>
<div class="d r n" style="left:921px;width:80px;top:362px">25.00</div>
<div class="d r n" style="left:1011px;width:85px;top:362px">600,00 Da</div>
<div class="d r n" style="left:1106px;width:109px;top:362px">15 000,00 Da</div>
<div class="d r n" style="left:1225px;width:109px;top:362px">8 750,00 Da</div>
<div class="d" style="left:1343px;top:362px;transform:scaleX(0.9);transform-origin:0 50%;letter-spacing:0.398px">EURL Santé Plus Parapharma</div>
<div class="d" style="left:1624px;top:362px;transform:scaleX(0.9);transform-origin:0 50%;letter-spacing:0.972px">Administrateur</div>
<div class="d" style="left:211px;top:822px;transform:scaleX(0.9);transform-origin:0 50%;letter-spacing:0.081px">Somme</div>
<div class="d r n" style="left:921px;width:80px;top:822px">258.00</div>
<div class="d r n" style="left:1106px;width:109px;top:822px">1 138 200,00 Da</div>
<div class="d r n" style="left:1225px;width:109px;top:822px">663 950,00 Da</div>
<div class="lbl" style="left:536px;top:865px">CHIFFRE D'AFFAIRE</div>
<div class="box" style="left:518px;top:880px;width:190px;height:36px"><div class="boxin"></div><div class="val" style="top:9px">1 138 200,00 DA</div></div>
<div class="lbl" style="left:735px;top:865px">BENEFICES</div>
<div class="box" style="left:719px;top:880px;width:185px;height:36px"><div class="boxin"></div><div class="val" style="top:9px">663 950,00 DA</div></div>
<div class="lbl" style="left:910px;top:865px">Remise C</div>
<div class="box" style="left:915px;top:880px;width:130px;height:36px"><div class="boxin"></div><div class="val" style="top:9px">0,00 DA</div></div>
<div class="lbl" style="left:1049px;top:867px">Remise F</div>
<div class="box" style="left:1054px;top:882px;width:130px;height:36px"><div class="boxin"></div><div class="val" style="top:9px">0,00 DA</div></div>
<div class="lbl" style="left:1209px;top:865px">CHARGES</div>
<div class="box" style="left:1191px;top:880px;width:184px;height:36px"><div class="boxin"></div><div class="val" style="top:9px">0,00 DA</div></div>
<div class="lbl" style="left:1406px;top:865px">BENEFICE NET</div>
<div class="box" style="left:1391px;top:880px;width:189px;height:36px"><div class="boxin"></div><div class="val" style="top:9px">663 950,00 DA</div></div>
</body></html>
